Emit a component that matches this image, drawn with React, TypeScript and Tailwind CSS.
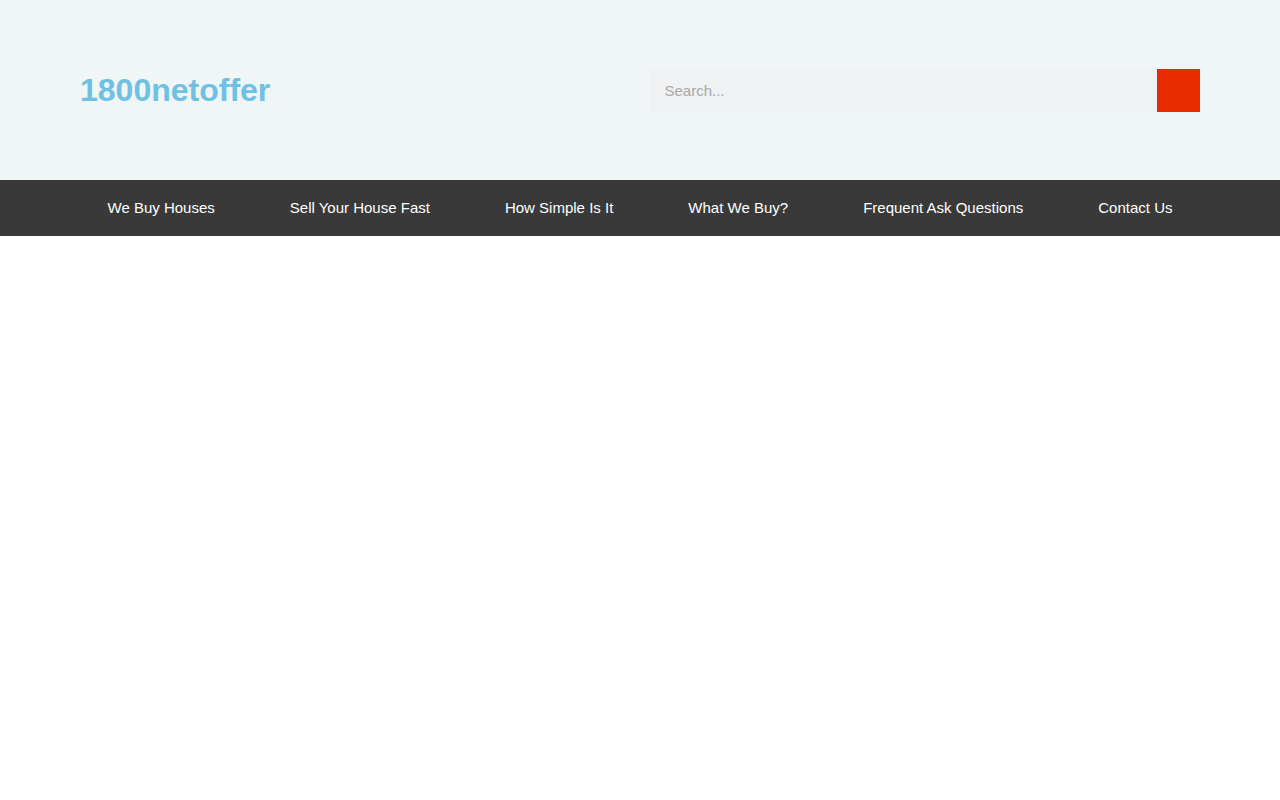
export default function App() {
  const items = ["We Buy Houses", "Sell Your House Fast", "How Simple Is It", "What We Buy?", "Frequent Ask Questions", "Contact Us"];
  return (
    <div className="min-h-[800px] bg-white font-['Liberation_Sans',Arial,sans-serif]">
      <header className="h-[180px] bg-[#f0f5f5] px-20 flex items-center justify-between">
        <a className="text-[32px] leading-none font-bold text-[#6ec1e4]">1800netoffer</a>
        <form className="flex w-[550px] h-[43px]">
          <input
            placeholder="Search..."
            className="flex-1 min-w-0 bg-[#eff1f3] pl-[14.5px] pr-[15px] text-[15px] leading-[43px] outline-none placeholder:text-[#a8a8a8]"
          />
          <button type="button" aria-label="Search" className="w-[43px] bg-[#e92c00]"></button>
        </form>
      </header>
      <nav className="h-14 bg-[#393939] px-20 pb-[2px] flex items-center justify-between">
        {items.map((t) => (
          <a key={t} className="px-[27.5px] whitespace-nowrap text-[15px] leading-none text-white">{t}</a>
        ))}
      </nav>
    </div>
  );
}
